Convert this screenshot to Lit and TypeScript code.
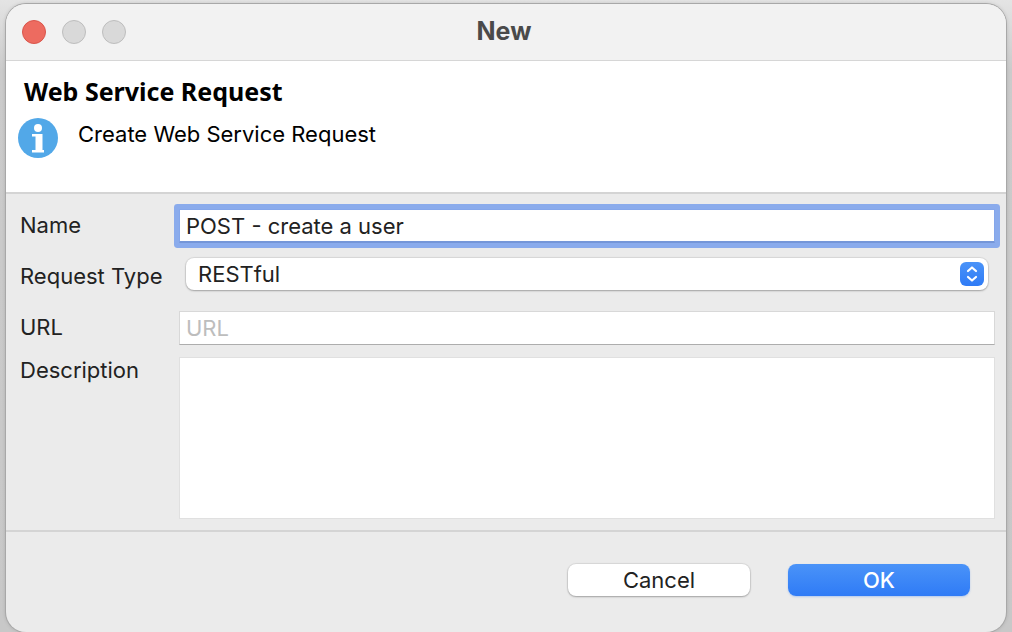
import { LitElement, html, css, svg } from "lit";
import { customElement, state } from "lit/decorators.js";

const infoIcon = svg`
  <svg class="info" viewBox="0 0 40 40" aria-hidden="true">
    <circle cx="20" cy="20" r="20" fill="#52a8e8" />
    <circle cx="20" cy="10" r="4" fill="#fff" />
    <path d="M14 16h10.5v16H26v2.5H14V32h3.500V18.500H14z" fill="#fff" />
  </svg>`;

const chevrons = svg`
  <svg viewBox="0 0 24 24" aria-hidden="true">
    <path d="M8 9 12 5.500l4 3.500M8 15l4 3.500 4-3.500" fill="none" stroke="#fff"
      stroke-width="2.2" stroke-linecap="round" stroke-linejoin="round" />
  </svg>`;

@customElement("app-root")
export class AppRoot extends LitElement {
  @state() private name = "POST - create a user";

  static styles = css`
    :host {
      display: flex;
      box-sizing: border-box;
      min-height: 100vh;
      padding: 4px 6px 0;
      background: linear-gradient(#e4e4e4, #cbcbcb 70px, #c8c8c8);
      font-family: Inter, "Liberation Sans", sans-serif;
      font-size: 22px;
      line-height: 28px;
      color: #222;
    }
    * {
      box-sizing: border-box;
    }
    .window {
      flex: 1;
      display: flex;
      flex-direction: column;
      min-width: 0;
      border-radius: 20px;
      overflow: hidden;
      background: #ebebeb;
      box-shadow: 0 0 0 1px #a8a8a8, 0 0 4px rgba(0, 0, 0, 0.2);
    }
    .titlebar {
      display: grid;
      grid-template-columns: 1fr auto 1fr;
      align-items: center;
      height: 57px;
      padding: 0 20px 0 16px;
      background: #f2f2f2;
      border-bottom: 1px solid #d6d6d6;
    }
    .lights {
      display: flex;
      gap: 16px;
    }
    .light {
      width: 24px;
      height: 24px;
      padding: 0;
      border: 1px solid #bdbdbd;
      border-radius: 50%;
      background: #d9d9d9;
    }
    .light.close {
      background: #ed6b60;
      border-color: #d9554b;
    }
    .title {
      margin: 0;
      padding-bottom: 2px;
      font-size: 25px;
      font-weight: 700;
      color: #4a4a4a;
    }
    .intro {
      height: 133px;
      padding: 16px 12px;
      background: #fff;
      border-bottom: 2px solid #d4d4d4;
      color: #000;
    }
    .heading {
      margin: 0 0 13px;
      padding-left: 6px;
      font-family: "Noto Sans", sans-serif;
      font-size: 25px;
      font-weight: 700;
    }
    .message {
      display: flex;
      gap: 20px;
    }
    .message p {
      margin: 2px 0 0;
    }
    .info {
      width: 40px;
      height: 40px;
    }
    .form {
      flex: 1;
      display: grid;
      grid-template-columns: 146px 1fr;
      grid-template-rows: 34px 44px 34px 1fr;
      row-gap: 12px;
      column-gap: 13px;
      padding: 15px 11px 11px 14px;
      border-bottom: 2px solid #d4d4d4;
    }
    label {
      align-self: center;
      padding-bottom: 3px;
      line-height: 26px;
      white-space: nowrap;
    }
    .top {
      align-self: start;
    }
    input,
    textarea,
    select {
      width: 100%;
      min-width: 0;
      margin: 0;
      font: inherit;
      color: inherit;
      background: #fff;
      border-radius: 0;
      outline: none;
    }
    input {
      height: 34px;
      padding: 0 6px;
      border: 1px solid #d8d8d8;
      border-bottom-color: #adadad;
    }
    input::placeholder {
      color: #bdbdbd;
      opacity: 1;
    }
    .focused {
      border-color: #84a6ea;
      border-bottom: 2px solid #7596d8;
      box-shadow: 0 0 0 5px #8aabec;
      border-radius: 1px;
    }
    textarea {
      height: 100%;
      min-height: 120px;
      padding: 4px 6px;
      border: 1px solid #e0e0e0;
      resize: none;
      display: block;
    }
    .picker {
      display: grid;
      align-self: start;
      align-items: center;
      margin: 3px 7px 0;
    }
    .picker > * {
      grid-area: 1 / 1;
    }
    select {
      height: 32px;
      padding: 0 40px 0 12px;
      appearance: none;
      border: 0;
      border-radius: 8px;
      box-shadow: 0 0 1px 1px rgba(0, 0, 0, 0.08), 0 1px 2px rgba(0, 0, 0, 0.25);
    }
    .knob {
      justify-self: end;
      width: 24px;
      height: 24px;
      margin-right: 4px;
      border-radius: 6px;
      background: linear-gradient(#4a93f8, #2f7bf6);
      pointer-events: none;
    }
    .knob svg {
      display: block;
    }
    .actions {
      display: flex;
      justify-content: flex-end;
      gap: 38px;
      height: 100px;
      padding: 32px 36px;
    }
    .button {
      width: 182px;
      height: 32px;
      padding: 0;
      border: 0;
      border-radius: 8px;
      font: inherit;
      color: inherit;
      background: #fff;
      box-shadow: 0 0 1px 1px rgba(0, 0, 0, 0.08), 0 1px 2px rgba(0, 0, 0, 0.25);
    }
    .primary {
      color: #fff;
      font-weight: 500;
      background: linear-gradient(#4a93f8, #2f7bf6);
      box-shadow: 0 1px 2px rgba(47, 123, 246, 0.3);
    }
  `;

  private onName(e: Event) {
    this.name = (e.target as HTMLInputElement).value;
  }

  render() {
    return html`
      <main class="window">
        <header class="titlebar">
          <div class="lights">
            <button class="light close" aria-label="Close"></button>
            <button class="light" aria-label="Minimize" disabled></button>
            <button class="light" aria-label="Zoom" disabled></button>
          </div>
          <h1 class="title">New</h1>
        </header>
        <section class="intro">
          <h2 class="heading">Web Service Request</h2>
          <div class="message">
            ${infoIcon}
            <p>Create Web Service Request</p>
          </div>
        </section>
        <form class="form" id="request">
          <label for="name">Name</label>
          <input id="name" class="focused" .value=${this.name} @input=${this.onName} />
          <label for="type">Request Type</label>
          <div class="picker">
            <select id="type">
              <option>RESTful</option>
              <option>SOAP</option>
            </select>
            <span class="knob">${chevrons}</span>
          </div>
          <label for="url">URL</label>
          <input id="url" placeholder="URL" />
          <label class="top" for="description">Description</label>
          <textarea id="description"></textarea>
        </form>
        <footer class="actions">
          <button class="button" type="button">Cancel</button>
          <button class="button primary" type="button">OK</button>
        </footer>
      </main>
    `;
  }
}
